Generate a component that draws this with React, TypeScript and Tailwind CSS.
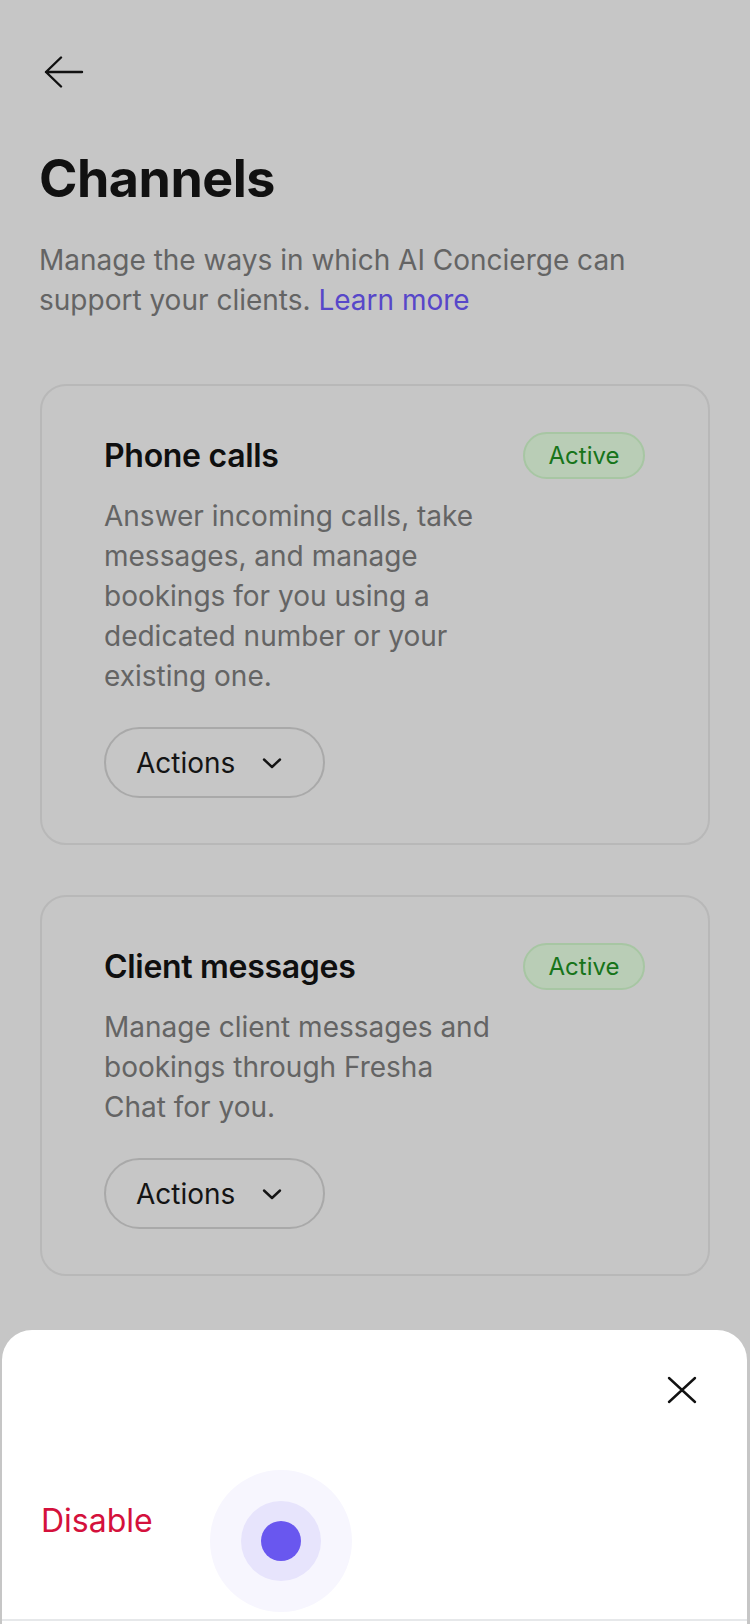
import React from "react";

function Card({ title, desc }: { title: string; desc: string }) {
  return (
    <div className="rounded-[26px] border-2 border-[#b8b8b8] pt-[46px] pb-[45px] pl-[62px] pr-[63px]">
      <div className="flex items-center justify-between">
        <div className="text-[32px] leading-[40px] font-semibold text-[#0f0f0f] tracking-[-0.3px]">{title}</div>
        <div className="h-[47px] w-[122px] rounded-full border-2 border-[#a7c6a3] bg-[#b9cdb6] flex items-center justify-center text-[24px] text-[#17741a]">
          Active
        </div>
      </div>
      <p className="mt-[17px] max-w-[394px] text-[28px] leading-[40px] text-[#646464]">{desc}</p>
      <button className="mt-[31px] h-[71px] rounded-full border-2 border-[#a9a9a9] pl-[30px] pr-[41px] flex items-center gap-[27px] text-[28px] text-[#141414]">
        <span>Actions</span>
        <svg width="20" height="12" viewBox="0 0 20 12" fill="none">
          <path d="M2 2.5 L10 10 L18 2.5" stroke="#141414" strokeWidth="2.4" strokeLinecap="round" strokeLinejoin="round" />
        </svg>
      </button>
    </div>
  );
}

export default function App() {
  return (
    <div
      className="relative w-[750px] h-[1624px] overflow-hidden bg-[#c6c6c6]"
      style={{ fontFamily: "Inter, 'Noto Sans', sans-serif" }}
    >
      <div className="px-[39px] pt-[56px]">
        <div className="pl-[5px]">
          <svg width="40" height="32" viewBox="0 0 40 32" fill="none">
            <path d="M2 16 H38 M17 1.5 L2 16 L17 30.5" stroke="#111" strokeWidth="2.4" strokeLinecap="round" strokeLinejoin="round" />
          </svg>
        </div>
        <h1 className="mt-[65px] text-[52px] leading-[52px] font-bold text-[#111] tracking-[-0.5px]">Channels</h1>
        <p className="mt-[35px] text-[28px] leading-[40px] text-[#646464]">
          Manage the ways in which AI Concierge can support your clients.{" "}
          <span className="text-[#5747c9]">Learn more</span>
        </p>
        <div className="mt-[64px] flex flex-col gap-[50px] mx-[1px]">
          <Card
            title="Phone calls"
            desc="Answer incoming calls, take messages, and manage bookings for you using a dedicated number or your existing one."
          />
          <Card title="Client messages" desc="Manage client messages and bookings through Fresha Chat for you." />
        </div>
      </div>

      <div className="absolute left-[2px] right-[3px] top-[1330px] bottom-0 rounded-t-[30px] bg-white flex flex-col">
        <div className="flex justify-end pt-[45px] pr-[50px]">
          <svg width="30" height="30" viewBox="0 0 30 30" fill="none">
            <path d="M2 3 L28 27 M28 3 L2 27" stroke="#111" strokeWidth="2.4" strokeLinecap="round" />
          </svg>
        </div>
        <div className="mt-[98px] pl-[39px] text-[32px] leading-[36px] text-[#d4113c]">Disable</div>
        <div className="mt-auto h-[5px] border-t-2 border-[#e6e8ea] bg-white" />
      </div>

      <div className="absolute left-[210px] top-[1470px] w-[142px] h-[142px] rounded-full bg-[#f7f6fe] flex items-center justify-center">
        <div className="w-[80px] h-[80px] rounded-full bg-[#e7e4fc] flex items-center justify-center">
          <div className="w-[40px] h-[40px] rounded-full bg-[#6957ef]" />
        </div>
      </div>
    </div>
  );
}
